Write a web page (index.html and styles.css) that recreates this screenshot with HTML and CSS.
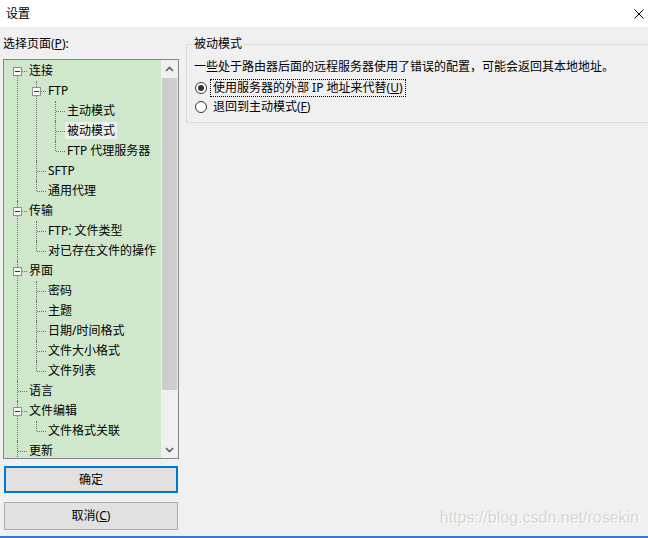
FILE: index.html
```html
<!DOCTYPE html>
<html lang="zh-CN">
<head>
    <meta charset="UTF-8">
    <title>设置</title>
    <link rel="stylesheet" href="styles.css">
</head>
<body>
    <div class="window">
        <div class="titlebar">
            <span class="title">设置</span>
            <svg class="close" width="10" height="10" viewBox="0 0 10 10">
                <path d="M0.5 0.5 L9.5 9.5 M9.5 0.5 L0.5 9.5" stroke="#000" stroke-width="1" fill="none"/>
            </svg>
        </div>

        <div class="content">
            <div class="sidebar">
                <div class="label">选择页面(<u>P</u>):</div>

                <div class="tree-box">
                    <div class="tree">
                        <ul class="root">
                            <li>
                                <div class="row"><span class="exp"></span><span class="text">连接</span></div>
                                <ul>
                                    <li>
                                        <div class="row"><span class="exp"></span><span class="text">FTP</span></div>
                                        <ul>
                                            <li><div class="row"><span class="text">主动模式</span></div></li>
                                            <li><div class="row selected"><span class="text">被动模式</span></div></li>
                                            <li><div class="row"><span class="text">FTP 代理服务器</span></div></li>
                                        </ul>
                                    </li>
                                    <li><div class="row"><span class="text">SFTP</span></div></li>
                                    <li><div class="row"><span class="text">通用代理</span></div></li>
                                </ul>
                            </li>
                            <li>
                                <div class="row"><span class="exp"></span><span class="text">传输</span></div>
                                <ul>
                                    <li><div class="row"><span class="text">FTP: 文件类型</span></div></li>
                                    <li><div class="row"><span class="text">对已存在文件的操作</span></div></li>
                                </ul>
                            </li>
                            <li>
                                <div class="row"><span class="exp"></span><span class="text">界面</span></div>
                                <ul>
                                    <li><div class="row"><span class="text">密码</span></div></li>
                                    <li><div class="row"><span class="text">主题</span></div></li>
                                    <li><div class="row"><span class="text">日期/时间格式</span></div></li>
                                    <li><div class="row"><span class="text">文件大小格式</span></div></li>
                                    <li><div class="row"><span class="text">文件列表</span></div></li>
                                </ul>
                            </li>
                            <li><div class="row"><span class="text">语言</span></div></li>
                            <li>
                                <div class="row"><span class="exp"></span><span class="text">文件编辑</span></div>
                                <ul>
                                    <li><div class="row"><span class="text">文件格式关联</span></div></li>
                                </ul>
                            </li>
                            <li><div class="row"><span class="text">更新</span></div></li>
                        </ul>
                    </div>

                    <div class="scrollbar">
                        <div class="sb-btn">
                            <svg width="9" height="6" viewBox="0 0 9 6"><path d="M1 5 L4.5 1.5 L8 5" stroke="#606060" stroke-width="1.6" fill="none"/></svg>
                        </div>
                        <div class="sb-track"><div class="sb-thumb"></div></div>
                        <div class="sb-btn">
                            <svg width="9" height="6" viewBox="0 0 9 6"><path d="M1 1 L4.5 4.5 L8 1" stroke="#606060" stroke-width="1.6" fill="none"/></svg>
                        </div>
                    </div>
                </div>

                <button class="btn btn-default">确定</button>
                <button class="btn">取消(<u>C</u>)</button>
            </div>

            <div class="panel">
                <fieldset class="group">
                    <legend>被动模式</legend>
                    <p class="desc">一些处于路由器后面的远程服务器使用了错误的配置，可能会返回其本地地址。</p>
                    <div class="radio checked">
                        <span class="circle"></span>
                        <span class="rtext focused">使用服务器的外部 IP 地址来代替(<u>U</u>)</span>
                    </div>
                    <div class="radio">
                        <span class="circle"></span>
                        <span class="rtext">退回到主动模式(<u>F</u>)</span>
                    </div>
                </fieldset>
            </div>
        </div>

        <div class="watermark">https://blog.csdn.net/rosekin</div>
    </div>
</body>
</html>
```

FILE: styles.css
```css
/* General */
body {
    margin: 0;
    font-family: "Noto Sans", "Noto Sans CJK SC", sans-serif;
    font-size: 12px;
    color: #000;
    background: #f0f0f0;
}

.window {
    position: relative;
    width: 648px;
    height: 538px;
    box-sizing: border-box;
    border-bottom: 2px solid #2a7fd4;
    overflow: hidden;
    background: #f0f0f0;
}

u {
    text-decoration: underline;
    text-underline-offset: 1px;
}

/* Title bar */
.titlebar {
    height: 27px;
    background: #fff;
    display: flex;
    align-items: center;
    justify-content: space-between;
    padding: 0 4px 0 6px;
}

.title {
    line-height: 16px;
}

/* Layout */
.content {
    display: flex;
    gap: 7px;
}

.sidebar {
    width: 176px;
    padding: 8px 0 0 3px;
    display: flex;
    flex-direction: column;
}

.label {
    line-height: 18px;
}

/* Tree */
.tree-box {
    margin-top: 6px;
    height: 400px;
    box-sizing: border-box;
    border: 1px solid #828790;
    display: flex;
    background: #cfe8cc;
}

.tree {
    flex: 1;
    overflow: hidden;
}

.tree ul {
    list-style: none;
    margin: 0;
    padding: 0;
}

.tree .root {
    padding: 1px 0 0 4px;
}

.tree ul ul {
    margin-left: -2px;
}

.tree li {
    position: relative;
    padding-left: 21px;
}

.tree li::before {
    content: "";
    position: absolute;
    left: 9px;
    top: 0;
    bottom: 0;
    border-left: 1px dotted #707070;
}

.tree li:last-child::before {
    bottom: auto;
    height: 10px;
}

.tree .root > li:first-child::before {
    top: 10px;
}

.tree .root > li:last-child::before {
    height: 20px;
}

.row {
    position: relative;
    height: 20px;
    line-height: 20px;
    white-space: nowrap;
}

.row::before {
    content: "";
    position: absolute;
    left: -11px;
    top: 10px;
    width: 9px;
    border-top: 1px dotted #707070;
}

.exp {
    position: absolute;
    left: -16px;
    top: 6px;
    width: 9px;
    height: 9px;
    box-sizing: border-box;
    border: 1px solid #919191;
    background: #f7f7f7;
    z-index: 1;
}

.exp::after {
    content: "";
    position: absolute;
    left: 1px;
    top: 3px;
    width: 5px;
    height: 1px;
    background: #333;
}

.row.selected .text {
    display: inline-block;
    line-height: 17px;
    padding: 0 2px;
    margin-left: -2px;
    background: #eef0ee;
    vertical-align: top;
    margin-top: 1px;
}

/* Scrollbar */
.scrollbar {
    width: 17px;
    display: flex;
    flex-direction: column;
    background: #f0f0f0;
}

.sb-btn {
    height: 17px;
    display: flex;
    align-items: center;
    justify-content: center;
}

.sb-track {
    flex: 1;
    padding: 1px 1px 0 1px;
}

.sb-thumb {
    height: 312px;
    background: #cdcdcd;
}

/* Buttons */
.btn {
    font: inherit;
    color: #000;
    background: #e1e1e1;
    border: 1px solid #adadad;
    height: 28px;
    width: 174px;
    margin: 9px 0 0 1px;
    padding: 0;
    line-height: 16px;
}

.btn-default {
    border: 2px solid #0078d7;
    height: 27px;
    margin-top: 7px;
}

/* Right panel */
.panel {
    flex: 1;
    padding-top: 9px;
    margin-right: -12px;
}

.group {
    margin: 0;
    min-width: 0;
    border: 1px solid #dcdcdc;
    padding: 0 0 6px 6px;
}

.group legend {
    padding: 0 1px;
    line-height: 16px;
}

.desc {
    margin: 7px 0 0 1px;
    line-height: 16px;
    white-space: nowrap;
}

.radio {
    display: flex;
    align-items: center;
    height: 19px;
    margin-left: 2px;
}

.radio.checked {
    margin-top: 3px;
}

.circle {
    width: 12px;
    height: 12px;
    box-sizing: border-box;
    border: 1px solid #333;
    border-radius: 50%;
    background: #fff;
    display: flex;
    align-items: center;
    justify-content: center;
    margin-right: 3px;
}

.radio.checked .circle::after {
    content: "";
    width: 6px;
    height: 6px;
    border-radius: 50%;
    background: #333;
}

.rtext {
    line-height: 16px;
    padding: 0 2px;
    border: 1px solid transparent;
}

.rtext.focused {
    border: 1px dotted #000;
}

/* Watermark */
.watermark {
    position: absolute;
    right: 9px;
    bottom: 9px;
    font-family: "Liberation Sans", sans-serif;
    font-size: 16px;
    color: #d6d6d6;
    text-shadow: 1px 1px 0 #fff;
}
```
